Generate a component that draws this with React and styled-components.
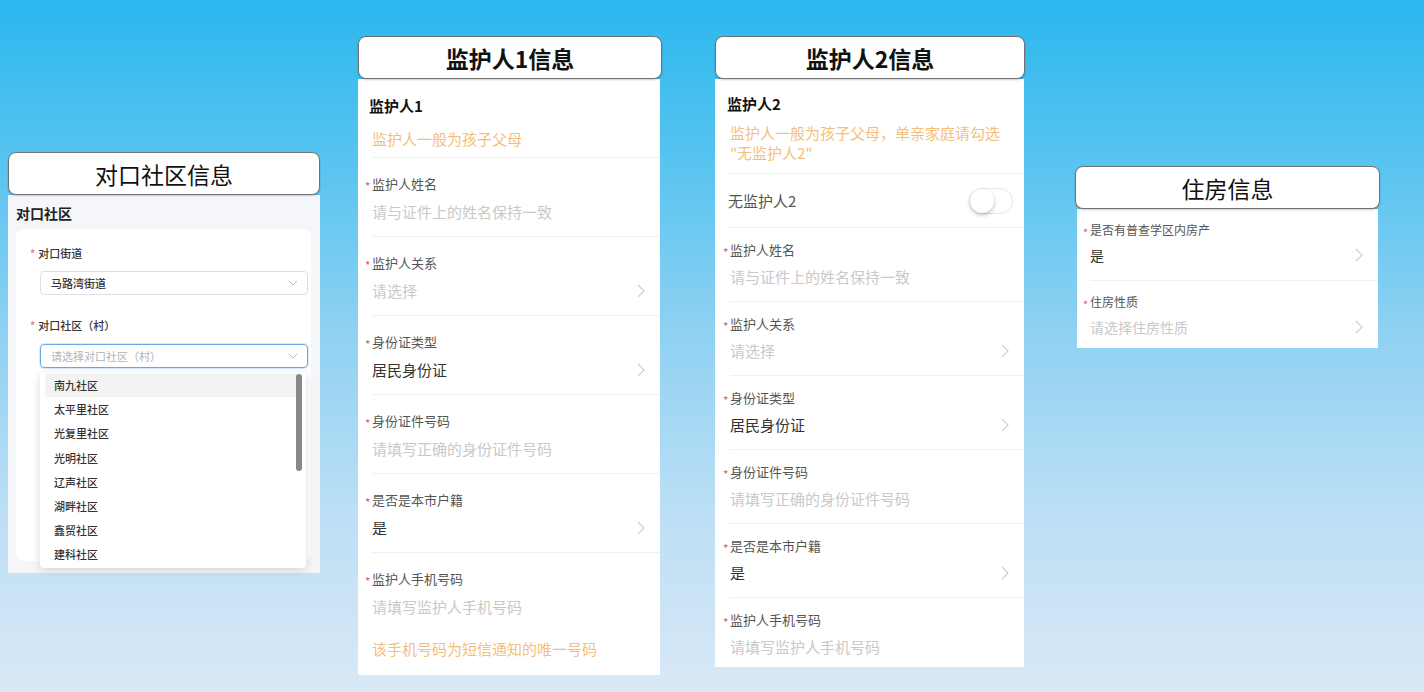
import React from "react";
import styled, { createGlobalStyle } from "styled-components";

const Global = createGlobalStyle`
  html, body { margin: 0; padding: 0; }
  body { font-family: "Noto Sans CJK SC", "Noto Sans", sans-serif; }
`;

const Stage = styled.div`
  width: 1424px;
  height: 692px;
  overflow: hidden;
  display: flex;
  align-items: flex-start;
  background: linear-gradient(180deg, #2cb7ee 0%, #55c3f0 22%, #8fd1f2 48%, #bcdff5 74%, #d9e8f6 100%);
`;

const Column = styled.section`
  width: ${(p) => p.$w}px;
  margin-left: ${(p) => p.$left}px;
  margin-top: ${(p) => p.$top}px;
  display: flex;
  flex-direction: column;
`;

const Header = styled.div`
  height: 43px;
  box-sizing: border-box;
  border: 1.5px solid #727272;
  border-radius: 8px;
  background: #fff;
  display: flex;
  align-items: center;
  justify-content: center;
  font-size: 23px;
  font-weight: ${(p) => (p.$bold ? 700 : 400)};
  color: #111;
  position: relative;
  z-index: 1;
  margin: 0 ${(p) => p.$mr || 0}px 0 ${(p) => p.$ml || 0}px;
  box-shadow: 0 1px 2px rgba(0, 0, 0, 0.2);
`;

/* ---------- Column 1: community ---------- */
const GreyPanel = styled.div`
  height: 378px;
  box-sizing: border-box;
  background: #f4f6f9;
  padding: 9px 9px 12px 8px;
  display: flex;
  flex-direction: column;
  gap: 7px;
`;

const PanelTitle = styled.div`
  font-size: 14px;
  line-height: 18px;
  font-weight: 700;
  color: #222;
`;

const Card = styled.div`
  flex: 1;
  background: #fff;
  border-radius: 8px;
  padding: 16px 3px 0 14px;
  display: flex;
  flex-direction: column;
`;

const FormItem = styled.div`
  display: flex;
  flex-direction: column;
  gap: ${(p) => p.$gap}px;
  margin-bottom: ${(p) => p.$mb || 0}px;
  position: relative;
`;

const SmallLabel = styled.div`
  font-size: 11px;
  line-height: 16px;
  color: #333;
  font-weight: 500;
`;

const RedStar = styled.span`
  color: #f56c6c;
  margin-right: 3px;
`;

const Select = styled.div`
  margin-left: 10px;
  height: 24px;
  box-sizing: border-box;
  border: 1px solid ${(p) => (p.$focus ? "#6aa6e8" : "#dcdfe6")};
  border-radius: 4px;
  padding: 0 9px 0 10px;
  display: flex;
  align-items: center;
  justify-content: space-between;
  font-size: 11px;
  color: ${(p) => (p.$placeholder ? "#b0b3b8" : "#333")};
  font-weight: ${(p) => (p.$placeholder ? 400 : 500)};
  box-shadow: ${(p) => (p.$focus ? "0 0 0 1px rgba(106,166,232,0.25)" : "none")};
`;

const Dropdown = styled.div`
  position: absolute;
  top: 55px;
  left: 10px;
  right: 2px;
  height: 196px;
  box-sizing: border-box;
  background: #fff;
  border-radius: 4px;
  box-shadow: 0 2px 10px rgba(0, 0, 0, 0.14);
  padding: 1px 0;
  z-index: 2;
`;

const Option = styled.div`
  margin: 0 8px 0 5px;
  height: 24.2px;
  display: flex;
  align-items: center;
  padding-left: 9px;
  font-size: 11px;
  font-weight: 500;
  color: #333;
  background: ${(p) => (p.$active ? "#f3f3f3" : "transparent")};
`;

const ScrollThumb = styled.div`
  position: absolute;
  top: 2px;
  right: 4px;
  width: 6px;
  height: 97px;
  border-radius: 3px;
  background: #888;
`;

/* ---------- Mobile form columns ---------- */
const WhitePanel = styled.div`
  background: #fff;
  display: flex;
  flex-direction: column;
  margin: 0 ${(p) => p.$mr || 0}px 0 ${(p) => p.$ml || 0}px;
  padding-bottom: ${(p) => p.$pb || 0}px;
`;

const Intro = styled.div`
  padding: ${(p) => p.$pt}px 0 ${(p) => p.$pb}px ${(p) => p.$pl}px;
  display: flex;
  flex-direction: column;
  gap: ${(p) => p.$gap}px;
`;

const Divider = styled.div`
  margin-left: ${(p) => p.$indent}px;
  border-bottom: 1px solid #f0f0f0;
`;

const Section = styled.div`
  font-size: 15px;
  line-height: 22px;
  font-weight: 700;
  color: #111;
`;

const Hint = styled.div`
  font-size: ${(p) => p.$size || 15}px;
  line-height: ${(p) => p.$lh || 22}px;
  color: #f3bf7c;
  padding-left: ${(p) => p.$pl || 0}px;
  padding-top: ${(p) => p.$pt || 0}px;
`;

const sizes = {
  lg: { pt: 17, gap: 8, pb: 13, label: 13, labelLH: 18, value: 15, valueLH: 22 },
  md: { pt: 13, gap: 7, pb: 13, label: 13, labelLH: 18, value: 15, valueLH: 22 },
  sm: { pt: 13, gap: 7, pb: 15, label: 12, labelLH: 16, value: 14, valueLH: 20 },
};

const Field = styled.div`
  margin-left: ${(p) => p.$indent}px;
  padding: ${(p) => sizes[p.$size].pt}px 0 ${(p) => (p.$last ? 0 : sizes[p.$size].pb)}px 0;
  border-bottom: ${(p) => (p.$last ? "none" : "1px solid #f0f0f0")};
  display: flex;
  flex-direction: column;
  gap: ${(p) => sizes[p.$size].gap}px;
`;

const FieldLabel = styled.div`
  font-size: ${(p) => sizes[p.$size].label}px;
  line-height: ${(p) => sizes[p.$size].labelLH}px;
  color: #555;
`;

const Star = styled.span`
  color: #e2566e;
  display: inline-block;
  width: 7px;
  margin-left: -7px;
  font-size: 0.9em;
  transform: translateY(2px);
`;

const ValueRow = styled.div`
  display: flex;
  align-items: center;
  justify-content: space-between;
  padding-right: 15px;
  font-size: ${(p) => sizes[p.$size].value}px;
  line-height: ${(p) => sizes[p.$size].valueLH}px;
  color: ${(p) => (p.$placeholder ? "#c9c9c9" : "#333")};
`;

const ToggleRow = styled.div`
  margin-left: ${(p) => p.$indent}px;
  height: 53px;
  border-bottom: 1px solid #f0f0f0;
  display: flex;
  align-items: center;
  justify-content: space-between;
  padding-right: 11px;
  font-size: 15px;
  color: #555;
`;

const Toggle = styled.div`
  width: 44px;
  height: 26px;
  box-sizing: border-box;
  border-radius: 13px;
  border: 1px solid #e6e6e6;
  background: #fff;
  position: relative;
`;

const Knob = styled.div`
  position: absolute;
  top: 0;
  left: 0;
  width: 24px;
  height: 24px;
  border-radius: 50%;
  background: #fff;
  box-shadow: 0 2px 4px rgba(0, 0, 0, 0.25);
`;

const Chevron = () => (
  <svg width="8" height="14" viewBox="0 0 8 14" fill="none">
    <polyline points="1,1 7,7 1,13" stroke="#cfcfcf" strokeWidth="1.2" />
  </svg>
);

const ChevronDown = () => (
  <svg width="10" height="6" viewBox="0 0 10 6" fill="none">
    <polyline points="1,1 5,5 9,1" stroke="#b8bcc4" strokeWidth="1" />
  </svg>
);

const FormField = ({ size, indent, label, value, placeholder, arrow, last }) => (
  <Field $size={size} $indent={indent} $last={last}>
    <FieldLabel $size={size}>
      <Star>*</Star>
      {label}
    </FieldLabel>
    <ValueRow $size={size} $placeholder={placeholder}>
      <span>{value}</span>
      {arrow && <Chevron />}
    </ValueRow>
  </Field>
);

const communities = ["南九社区", "太平里社区", "光复里社区", "光明社区", "辽声社区", "湖畔社区", "鑫贸社区", "建科社区"];

const guardianFields = [
  { label: "监护人姓名", value: "请与证件上的姓名保持一致", placeholder: true },
  { label: "监护人关系", value: "请选择", placeholder: true, arrow: true },
  { label: "身份证类型", value: "居民身份证", arrow: true },
  { label: "身份证件号码", value: "请填写正确的身份证件号码", placeholder: true },
  { label: "是否是本市户籍", value: "是", arrow: true },
  { label: "监护人手机号码", value: "请填写监护人手机号码", placeholder: true },
];

export default function App() {
  return (
    <>
      <Global />
      <Stage>
        <Column $w={312} $left={8} $top={152}>
          <Header>对口社区信息</Header>
          <GreyPanel>
            <PanelTitle>对口社区</PanelTitle>
            <Card>
              <FormItem $gap={10} $mb={22}>
                <SmallLabel>
                  <RedStar>*</RedStar>对口街道
                </SmallLabel>
                <Select>
                  <span>马路湾街道</span>
                  <ChevronDown />
                </Select>
              </FormItem>
              <FormItem $gap={11}>
                <SmallLabel>
                  <RedStar>*</RedStar>对口社区（村）
                </SmallLabel>
                <Select $focus $placeholder>
                  <span>请选择对口社区（村）</span>
                  <ChevronDown />
                </Select>
                <Dropdown>
                  {communities.map((c, i) => (
                    <Option key={c} $active={i === 0}>
                      {c}
                    </Option>
                  ))}
                  <ScrollThumb />
                </Dropdown>
              </FormItem>
            </Card>
          </GreyPanel>
        </Column>

        <Column $w={304} $left={38} $top={36}>
          <Header $bold>监护人1信息</Header>
          <WhitePanel $mr={2} $pb={15}>
            <Intro $pt={16} $pb={7} $pl={11} $gap={11}>
              <Section>监护人1</Section>
              <Hint $pl={3}>监护人一般为孩子父母</Hint>
            </Intro>
            <Divider $indent={14} />
            {guardianFields.map((f, i) => (
              <FormField key={f.label} size="lg" indent={14} {...f} last={i === guardianFields.length - 1} />
            ))}
            <Hint $pl={14} $pt={20}>该手机号码为短信通知的唯一号码</Hint>
          </WhitePanel>
        </Column>

        <Column $w={310} $left={53} $top={36}>
          <Header $bold>监护人2信息</Header>
          <WhitePanel $mr={1} $pb={9}>
            <Intro $pt={14} $pb={10} $pl={12} $gap={8}>
              <Section>监护人2</Section>
              <Hint $pl={3} $lh={20}>
                监护人一般为孩子父母，单亲家庭请勾选
                <br />
                "无监护人2"
              </Hint>
            </Intro>
            <Divider $indent={13} />
            <ToggleRow $indent={13}>
              <span>无监护人2</span>
              <Toggle>
                <Knob />
              </Toggle>
            </ToggleRow>
            {guardianFields.map((f, i) => (
              <FormField key={f.label} size="md" indent={15} {...f} last={i === guardianFields.length - 1} />
            ))}
          </WhitePanel>
        </Column>

        <Column $w={305} $left={50} $top={166}>
          <Header>住房信息</Header>
          <WhitePanel $ml={2} $mr={2} $pb={11}>
            <FormField size="sm" indent={13} label="是否有普查学区内房产" value="是" arrow />
            <FormField size="sm" indent={13} label="住房性质" value="请选择住房性质" placeholder arrow last />
          </WhitePanel>
        </Column>
      </Stage>
    </>
  );
}
